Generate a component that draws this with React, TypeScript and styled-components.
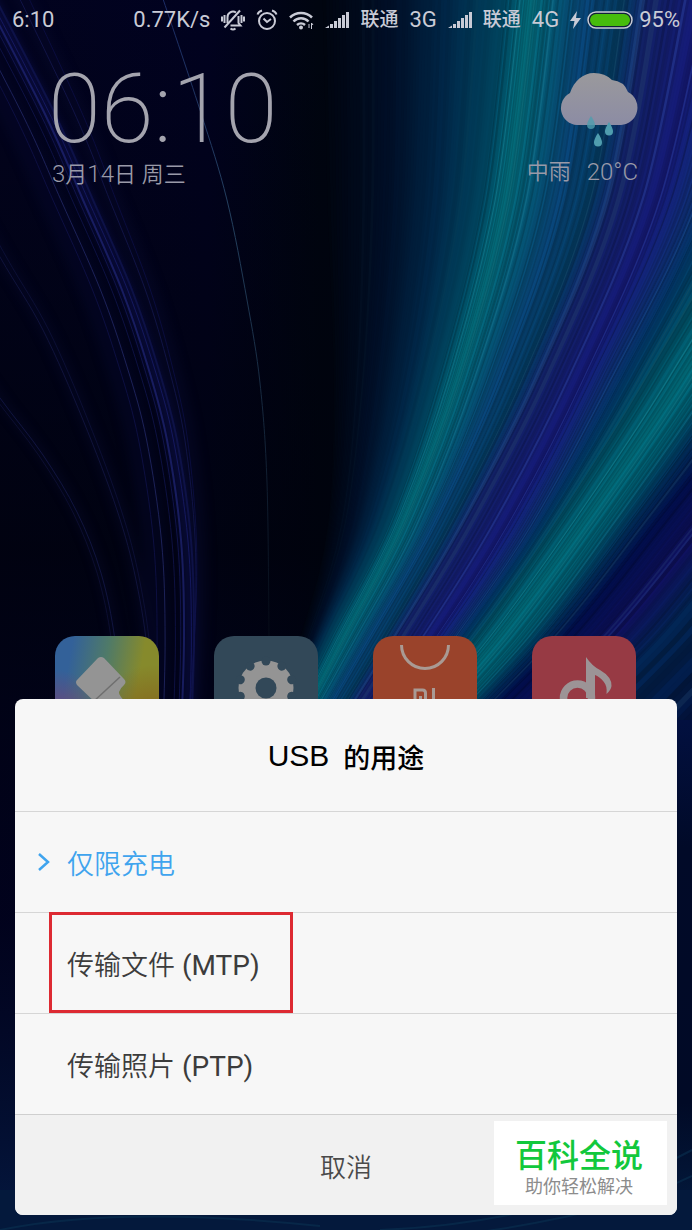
import React from 'react';
import styled, { createGlobalStyle } from 'styled-components';

const GlobalStyle = createGlobalStyle`
  * { box-sizing: border-box; }
  body { margin: 0; background: #01020e; font-family: Roboto, "Noto Sans CJK SC", sans-serif; }
  h1, h2, p, ul { margin: 0; padding: 0; font-weight: 400; }
  ul { list-style: none; }
  button { border: 0; margin: 0; background: none; font: inherit; cursor: pointer; }
`;

/* ---------- wallpaper ---------- */

type Strand = { xs: number[]; c: [number, number, number] };

const levels = [-10, 200, 380, 527, 640, 760];

const strands: Strand[] = [
  { xs: [325, 330, 336, 330, 302, 262], c: [0, 5, 16] },
  { xs: [390, 388, 374, 352, 314, 268], c: [0, 14, 38] },
  { xs: [450, 440, 412, 372, 322, 270], c: [0, 38, 70] },
  { xs: [508, 484, 440, 390, 332, 274], c: [0, 68, 94] },
  { xs: [533, 506, 458, 402, 344, 282], c: [4, 104, 118] },
  { xs: [556, 528, 476, 418, 357, 290], c: [4, 82, 108] },
  { xs: [590, 560, 500, 434, 370, 300], c: [8, 62, 108] },
  { xs: [625, 590, 522, 450, 385, 312], c: [4, 56, 92] },
  { xs: [652, 614, 542, 466, 398, 322], c: [16, 30, 92] },
  { xs: [708, 660, 584, 508, 436, 350], c: [20, 24, 112] },
  { xs: [745, 692, 606, 528, 452, 362], c: [14, 42, 106] },
  { xs: [772, 714, 626, 542, 464, 370], c: [2, 50, 92] },
  { xs: [812, 750, 652, 558, 478, 380], c: [0, 74, 94] },
  { xs: [858, 788, 684, 584, 500, 396], c: [2, 102, 116] },
  { xs: [895, 820, 712, 610, 526, 416], c: [0, 82, 102] },
  { xs: [930, 852, 740, 634, 546, 430], c: [2, 38, 80] },
  { xs: [965, 885, 770, 657, 566, 446], c: [2, 12, 66] },
  { xs: [1020, 940, 820, 705, 612, 490], c: [14, 16, 88] },
  { xs: [1080, 1000, 875, 755, 664, 540], c: [2, 34, 76] },
  { xs: [1200, 1120, 1000, 890, 806, 700], c: [2, 12, 52] },
];

const curve = (pts: number[][]) => {
  let d = `M${pts[0][0].toFixed(1)} ${pts[0][1]}`;
  for (let i = 0; i < pts.length - 1; i++) {
    const p0 = pts[Math.max(0, i - 1)];
    const p1 = pts[i];
    const p2 = pts[i + 1];
    const p3 = pts[Math.min(pts.length - 1, i + 2)];
    const a = [p1[0] + (p2[0] - p0[0]) / 6, p1[1] + (p2[1] - p0[1]) / 6];
    const b = [p2[0] - (p3[0] - p1[0]) / 6, p2[1] - (p3[1] - p1[1]) / 6];
    d += `C${a[0].toFixed(1)} ${a[1].toFixed(1)} ${b[0].toFixed(1)} ${b[1].toFixed(1)} ${p2[0].toFixed(1)} ${p2[1]}`;
  }
  return d;
};

const buildRays = () => {
  let seed = 17;
  const rand = () => {
    seed = (seed * 16807) % 2147483647;
    return seed / 2147483647;
  };
  const rays: { d: string; color: string; w: number }[] = [];
  const per = 20;
  strands.slice(0, -1).forEach((s, i) => {
    const n = strands[i + 1];
    for (let k = 0; k < per; k++) {
      const t = k / per;
      const xs = s.xs.map((x, j) => x + (n.xs[j] - x) * t);
      const quiet = i < 3 ? 0.25 : 1;
      const shade = 1 + (rand() - 0.5) * 0.3 * quiet;
      const lift = rand() > 0.93 ? 16 * quiet : 0;
      const c = s.c.map((v, j) => Math.round((v + (n.c[j] - v) * t) * shade + lift * (j === 0 ? 0.6 : 1)));
      rays.push({
        d: curve(xs.map((x, j) => [x, levels[j]])),
        color: `rgb(${c.join(',')})`,
        w: i === strands.length - 2 ? 9 : 5,
      });
    }
  });
  return rays;
};

const rays = buildRays();

const mainArc = [[-40, -50], [43, 110], [83, 200], [122, 290], [148, 367], [167, 440], [181, 540], [184, 640], [180, 760]];
const shift = (pts: number[][], top: number, bottom: number) =>
  pts.map(([x, y]) => [x + top + ((bottom - top) * (y + 50)) / 810, y]);

const outerArc = [[-60, 150], [0, 257], [43, 330], [83, 420], [117, 510], [136, 580], [148, 660], [150, 760]];
const lowArc = [[-40, 340], [0, 398], [43, 455], [77, 512], [101, 573], [115, 640], [122, 720]];

const glows = [
  { pts: shift(mainArc, 4, 6), color: '#10145c', w: 12, o: 0.5 },
  { pts: shift(mainArc, -34, -24), color: '#06072c', w: 26, o: 0.4 },
  { pts: shift(mainArc, 40, 8), color: '#07092e', w: 18, o: 0.4 },
  { pts: shift(outerArc, 4, 2), color: '#080a2c', w: 12, o: 0.4 },
  { pts: lowArc, color: '#0a0d30', w: 8, o: 0.4 },
];

const threads = [
  { pts: mainArc, color: '#252c84', w: 2, o: 0.6 },
  { pts: shift(mainArc, 4, 8), color: '#1a2070', w: 1, o: 0.7 },
  { pts: shift(mainArc, -5, -3), color: '#151a5c', w: 1, o: 0.7 },
  { pts: shift(mainArc, 10, 10), color: '#161b62', w: 2, o: 0.5 },
  { pts: shift(mainArc, -24, -18), color: '#262e70', w: 1, o: 0.7 },
  { pts: shift(mainArc, -12, -8), color: '#10144c', w: 1, o: 0.8 },
  { pts: shift(mainArc, -32, -26), color: '#0f124a', w: 1, o: 0.8 },
  { pts: shift(mainArc, 36, 6), color: '#161a54', w: 1, o: 0.7 },
  { pts: shift(mainArc, 46, 4), color: '#0d104a', w: 1, o: 0.7 },
  { pts: outerArc, color: '#191d50', w: 1, o: 0.6 },
  { pts: shift(outerArc, 9, 2), color: '#121644', w: 1, o: 0.6 },
  { pts: lowArc, color: '#1a2058', w: 1, o: 0.6 },
  { pts: shift(lowArc, -7, -3), color: '#0f133a', w: 1, o: 0.7 },
];

const Backdrop = styled.svg`
  position: absolute;
  inset: 0;
  width: 100%;
  height: 100%;
  z-index: -1;
`;

const Wallpaper = () => (
  <Backdrop viewBox="0 0 692 1230" preserveAspectRatio="xMidYMin slice" aria-hidden="true">
    <defs>
      <linearGradient id="night" x1="0" y1="0" x2="1" y2="0">
        <stop offset="0" stopColor="#02031e" />
        <stop offset="0.3" stopColor="#010220" />
        <stop offset="0.46" stopColor="#000510" />
      </linearGradient>
      <linearGradient id="fall" x1="0" y1="0" x2="0" y2="1">
        <stop offset="0" stopColor="#00020c" stopOpacity="0" />
        <stop offset="0.45" stopColor="#00020c" stopOpacity="0.75" />
        <stop offset="0.75" stopColor="#01021c" stopOpacity="0.6" />
        <stop offset="1" stopColor="#041840" stopOpacity="1" />
      </linearGradient>
      <linearGradient id="floor" x1="0" y1="0" x2="0" y2="1">
        <stop offset="0" stopColor="#021040" />
        <stop offset="0.25" stopColor="#010a28" />
        <stop offset="0.75" stopColor="#010a26" />
        <stop offset="1" stopColor="#031c40" />
      </linearGradient>
      <linearGradient id="comet" gradientUnits="userSpaceOnUse" x1="0" y1="0" x2="0" y2="620">
        <stop offset="0" stopColor="#1c2c66" />
        <stop offset="0.35" stopColor="#24405e" />
        <stop offset="1" stopColor="#060c18" />
      </linearGradient>
      <filter id="soft" x="-20%" y="-5%" width="140%" height="110%" colorInterpolationFilters="sRGB">
        <feGaussianBlur stdDeviation="5" />
      </filter>
    </defs>
    <rect width="692" height="1230" fill="url(#night)" />
    <rect width="340" height="1230" fill="url(#fall)" />
    <g fill="none" filter="url(#soft)">
      {glows.map((a, i) => (
        <path key={i} d={curve(a.pts)} stroke={a.color} strokeWidth={a.w} opacity={a.o} />
      ))}
    </g>
    <g fill="none">
      {threads.map((a, i) => (
        <path key={i} d={curve(a.pts)} stroke={a.color} strokeWidth={a.w} opacity={a.o} />
      ))}
      <path
        d={curve([[160, -10], [200, 110], [227, 200], [247, 300], [260, 383], [267, 483], [269, 640]])}
        stroke="url(#comet)"
      />
      {rays.map((r, i) => (
        <path key={i} d={r.d} stroke={r.color} strokeWidth={r.w} />
      ))}
    </g>
    <rect x="340" y="720" width="352" height="510" fill="url(#floor)" />
    <rect x="0" y="1190" width="692" height="40" fill="#04193c" />
    <path d="M0 1230Q120 1205 320 1226M380 1230Q560 1222 692 1150M480 1232Q620 1212 692 1176" stroke="#0a3050" strokeWidth="2" fill="none" opacity=".6" />
  </Backdrop>
);

/* ---------- home screen ---------- */

const Phone = styled.div`
  position: relative;
  isolation: isolate;
  min-height: 100vh;
  overflow: hidden;
  display: flex;
  flex-direction: column;
`;

const StatusBar = styled.header`
  display: flex;
  align-items: center;
  justify-content: space-between;
  height: 40px;
  padding: 0 12px;
  color: #c9cbd6;
  font-size: 22px;
  line-height: 40px;
  white-space: nowrap;
`;

const StatusGroup = styled.div`
  display: flex;
  align-items: center;
  gap: 11px;
`;

const Carrier = styled.span`
  font-size: 19px;
  font-weight: 500;
`;

const Power = styled.div`
  display: flex;
  align-items: center;
  gap: 6px;
`;

const Widgets = styled.section`
  display: flex;
  justify-content: space-between;
  padding: 22px 54px 0 48px;
  color: #9a9aa8;
`;

const Clock = styled.time`
  display: block;
  height: 94px;
  font-size: 96px;
  font-weight: 200;
  line-height: 94px;
  color: #a4a4ae;
`;

const Caption = styled.p`
  display: flex;
  gap: 16px;
  padding-left: 4px;
  font-size: 24px;
  font-weight: 300;
  line-height: 36px;
  white-space: pre;
`;

const Han = styled.span`
  font-size: 22px;
  font-weight: 350;
`;

const Weather = styled.div`
  display: flex;
  flex-direction: column;
  align-items: flex-end;
  gap: 6px;
  padding-top: 10px;
`;

const Apps = styled.nav`
  display: flex;
  justify-content: space-between;
  margin-top: 443px;
  padding: 0 56px 0 55px;
`;

const AppIcon = styled.button<{ $bg: string }>`
  width: 104px;
  height: 104px;
  padding: 0;
  border-radius: 20px;
  overflow: hidden;
  background: ${(p) => p.$bg};

  svg { display: block; }
`;

/* ---------- dialog ---------- */

const Dialog = styled.section`
  position: absolute;
  left: 15px;
  right: 15px;
  bottom: 15px;
  border-radius: 8px;
  background: #f7f7f7;
  color: #333;
`;

const Title = styled.h1`
  display: flex;
  align-items: center;
  justify-content: center;
  gap: 14px;
  height: 112px;
  padding-top: 2px;
  font-size: 27px;
  font-weight: 500;
  color: #000;
`;

const TitleLatin = styled.span`
  font-family: "Liberation Sans", sans-serif;
  font-size: 30px;
  font-weight: 400;
`;

const Option = styled.li`
  position: relative;
  border-top: 1px solid #d6d6d6;
`;

const OptionButton = styled.button<{ $on?: boolean }>`
  display: flex;
  align-items: center;
  width: 100%;
  height: 100px;
  padding: 0 22px;
  text-align: left;
  font-size: 28px;
  color: ${(p) => (p.$on ? '#3fa4ee' : '#3c3c3c')};
`;

const Marker = styled.span`
  display: flex;
  width: 30px;
`;

const OptionHan = styled.span`
  font-size: 27px;
  font-weight: 350;
`;

const Highlight = styled.span`
  position: absolute;
  left: 34px;
  top: -1px;
  width: 244px;
  height: 101px;
  border: 3px solid #dd2a32;
  pointer-events: none;
`;

const Cancel = styled.button`
  display: block;
  width: 100%;
  height: 101px;
  padding: 0;
  border-top: 1px solid #cfcfcf;
  border-radius: 0 0 8px 8px;
  background: #f1f1f1;
  font-size: 26px;
  font-weight: 350;
  color: #4a4a4a;
`;

const Badge = styled.aside`
  position: absolute;
  right: 10px;
  bottom: 10px;
  width: 173px;
  height: 84px;
  padding: 15px 3px 0 0;
  background: #fff;
  text-align: center;
`;

const BadgeName = styled.p`
  font-size: 32px;
  font-weight: 500;
  line-height: 40px;
  color: #12c83c;
`;

const BadgeNote = styled.p`
  font-size: 18px;
  line-height: 22px;
  color: #8c8c8c;
`;

/* ---------- drawings ---------- */

const MuteIcon = () => (
  <svg width="24" height="22" viewBox="0 0 24 22" fill="none" stroke="currentColor" strokeWidth="2">
    <path d="M6.500 14V8.500a5.500 5.500 0 0 1 8.500-5M17.500 7v7l2 2.500H9.500" />
    <path d="M3.500 18.500L19 1.500" />
    <path d="M9.500 19.500q2.500 2 5 0" />
    <path d="M3.500 6v8M1 7.500v5M20.500 6v8M23 7.500v5" />
  </svg>
);

const AlarmIcon = () => (
  <svg width="22" height="22" viewBox="0 0 22 22" fill="none" stroke="currentColor" strokeWidth="2">
    <circle cx="11" cy="12" r="8" />
    <path d="M7.500 9.500L11 13l4-3" />
    <path d="M1.500 5.500Q2.500 2.500 6 1.500M20.500 5.500Q19.500 2.500 16 1.500" />
  </svg>
);

const WifiIcon = () => (
  <svg width="25" height="20" viewBox="0 0 25 20" fill="none" stroke="currentColor" strokeWidth="2.500">
    <path d="M1 7.500a15.500 15.500 0 0 1 22 0M4.500 11.500a10.500 10.500 0 0 1 15 0M8 15a6 6 0 0 1 8 0" />
    <circle cx="12" cy="17.500" r="2" fill="currentColor" stroke="none" />
    <path d="M22.500 19v-6l1.500 2M20 14v4" strokeWidth="1" />
  </svg>
);

const SignalIcon = () => (
  <svg width="24" height="16" viewBox="0 0 24 16" fill="currentColor">
    <path d="M0 16l4-2.500V16zM5 12h3v4H5zM9 9h3v7H9zM13 6h3v10h-3zM17 3h3v13h-3zM21 0h3v16h-3z" />
  </svg>
);

const BoltIcon = () => (
  <svg width="11" height="18" viewBox="0 0 11 18" fill="currentColor">
    <path d="M7 0L0 10h4.500L3 18l8-11H6z" />
  </svg>
);

const BatteryIcon = () => (
  <svg width="46" height="18" viewBox="0 0 46 18">
    <rect x="1" y="1" width="44" height="16" rx="8" fill="#10203a" stroke="#c9cbd6" strokeWidth="1.500" />
    <rect x="3" y="3" width="40" height="12" rx="6" fill="#46bc0c" />
  </svg>
);

const CloudIcon = () => (
  <svg width="78" height="76" viewBox="0 0 78 76">
    <defs>
      <linearGradient id="cloud" x1="0" y1="0" x2="0" y2="1">
        <stop offset="0" stopColor="#9a999c" />
        <stop offset="1" stopColor="#8c8ca4" />
      </linearGradient>
    </defs>
    <path d="M17 53A17 17 0 0 1 10 21C14 9 23 1 34 1Q45 1 52 8Q64 9 68 20A17.500 17.500 0 0 1 61 53Z" fill="url(#cloud)" />
    <g fill="#4f9dae">
      <path d="M31 44q4 6 4 9a4 4 0 0 1-8 0q0-3 4-9z" opacity=".8" />
      <path d="M49 50q4 6 4 9.500a4 4 0 0 1-8 0q0-3.500 4-9.500z" />
      <path d="M38 61q4 6 4 9.500a4 4 0 0 1-8 0q0-3.500 4-9.500z" />
    </g>
  </svg>
);

const ThemeArt = () => (
  <svg width="104" height="104" viewBox="0 0 104 104">
    <path d="M43 22q3-2 6 0l20 21q3 3 0 6-8 7-3 12l8 10-28 28-26-30 23 0-21-20q-2-3 0-5z" fill="#949494" />
    <path d="M65 41L38 66" stroke="#6f6f6f" strokeWidth="1.500" />
  </svg>
);

const notches = Array.from({ length: 10 }, (_, i) => i * 36);

const SettingsArt = () => (
  <svg width="104" height="104" viewBox="0 0 104 104">
    <circle cx="52" cy="52" r="27.500" fill="#949494" />
    {notches.map((a) => (
      <circle key={a} cx="52" cy="25" r="4.500" fill="#324858" transform={`rotate(${a} 52 52)`} />
    ))}
    <circle cx="52" cy="52" r="10.500" fill="#324858" />
  </svg>
);

const StoreArt = () => (
  <svg width="104" height="104" viewBox="0 0 104 104" fill="none" stroke="#a99a94">
    <path d="M28.500 9a23.500 23.500 0 0 0 47 0" strokeWidth="3" />
    <path d="M42 70V54h7.500q3 0 3 3v13M47.500 60v10M60.500 52v18" strokeWidth="3" />
  </svg>
);

const MusicArt = () => (
  <svg width="104" height="104" viewBox="0 0 104 104">
    <circle cx="45.500" cy="62" r="14" fill="none" stroke="#9c9496" strokeWidth="7.500" />
    <path d="M54 21q6 9 14 13 12 7 11.500 16-.500 4-5 8 1-8-3-12.500-4-5-8.500-6.500V62h-9z" fill="#9c9496" />
  </svg>
);

const apps = [
  {
    name: '主题',
    bg: 'radial-gradient(circle at 95% 85%, #85601a 0, rgba(133,96,26,0) 45%), radial-gradient(circle at 0 85%, #7a4070 0, rgba(122,64,112,0) 40%), linear-gradient(100deg, #336199 15%, #4f7a68 45%, #868a2c 75%)',
    art: <ThemeArt />,
  },
  { name: '设置', bg: '#324858', art: <SettingsArt /> },
  { name: '小米商城', bg: '#9a432b', art: <StoreArt /> },
  { name: '音乐', bg: '#973a44', art: <MusicArt /> },
];

export default function App() {
  return (
    <Phone>
      <GlobalStyle />
      <Wallpaper />
      <StatusBar>
        <span>6:10</span>
        <StatusGroup>
          <span>0.77K/s</span>
          <MuteIcon />
          <AlarmIcon />
          <WifiIcon />
          <SignalIcon />
          <Carrier>联通</Carrier>
          <span>3G</span>
          <SignalIcon />
          <Carrier>联通</Carrier>
          <span>4G</span>
          <Power>
            <BoltIcon />
            <BatteryIcon />
            <span>95%</span>
          </Power>
        </StatusGroup>
      </StatusBar>

      <Widgets>
        <div>
          <Clock>06:10</Clock>
          <Caption>
            <span>3<Han>月</Han>14<Han>日</Han> <Han>周三</Han></span>
          </Caption>
        </div>
        <Weather>
          <CloudIcon />
          <Caption>
            <Han>中雨</Han>
            <span>20°C</span>
          </Caption>
        </Weather>
      </Widgets>

      <Apps aria-label="应用">
        {apps.map((a) => (
          <AppIcon key={a.name} $bg={a.bg} aria-label={a.name}>
            {a.art}
          </AppIcon>
        ))}
      </Apps>

      <Dialog role="dialog" aria-labelledby="usb-title">
        <Title id="usb-title">
          <TitleLatin>USB</TitleLatin>
          <span>的用途</span>
        </Title>
        <ul>
          <Option>
            <OptionButton $on>
              <Marker>
                <svg width="14" height="20" viewBox="0 0 14 20" fill="none" stroke="currentColor" strokeWidth="2.500">
                  <path d="M2 2l9 8-9 8" />
                </svg>
              </Marker>
              <OptionHan>仅限充电</OptionHan>
            </OptionButton>
          </Option>
          <Option>
            <OptionButton>
              <Marker />
              <span><OptionHan>传输文件</OptionHan> (MTP)</span>
            </OptionButton>
            <Highlight />
          </Option>
          <Option>
            <OptionButton>
              <Marker />
              <span><OptionHan>传输照片</OptionHan> (PTP)</span>
            </OptionButton>
          </Option>
        </ul>
        <Cancel>取消</Cancel>
        <Badge>
          <BadgeName>百科全说</BadgeName>
          <BadgeNote>助你轻松解决</BadgeNote>
        </Badge>
      </Dialog>
    </Phone>
  );
}
